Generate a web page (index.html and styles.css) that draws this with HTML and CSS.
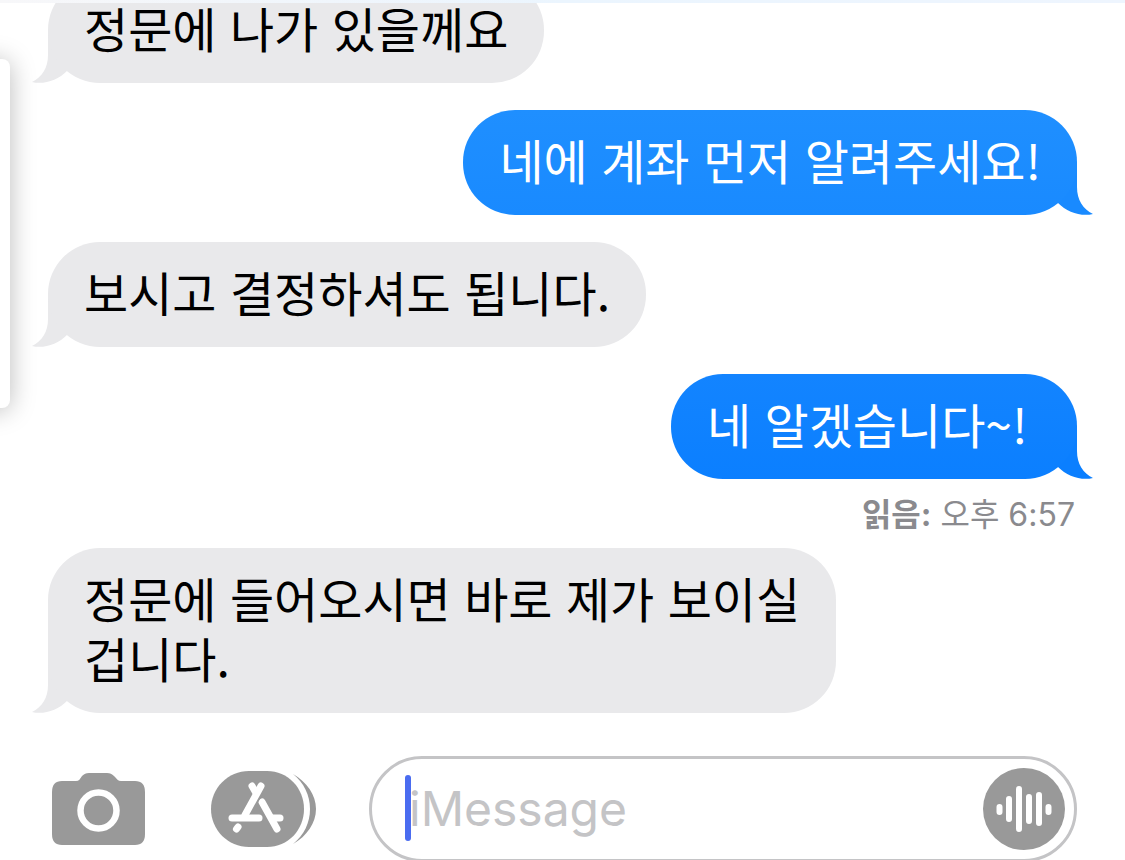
FILE: index.html
```html
<!DOCTYPE html>
<html lang="ko">
<head>
    <meta charset="UTF-8">
    <meta name="viewport" content="width=device-width, initial-scale=1.0">
    <title>iMessage</title>
    <link rel="stylesheet" href="styles.css">
</head>
<body>
    <div class="top-strip"></div>
    <main class="messages">
        <div class="bubble received">정문에 나가 있을께요
            <svg class="tail" viewBox="0 0 52 52"><path d="M16 0V24C16 37 10 46 0 51C12 54 26 49 35 40L52 0Z"/></svg>
        </div>
        <div class="bubble sent light">네에 계좌 먼저 알려주세요!
            <svg class="tail" viewBox="0 0 52 52"><path d="M16 0V24C16 37 10 46 0 51C12 54 26 49 35 40L52 0Z"/></svg>
        </div>
        <div class="bubble received">보시고 결정하셔도 됩니다.
            <svg class="tail" viewBox="0 0 52 52"><path d="M16 0V24C16 37 10 46 0 51C12 54 26 49 35 40L52 0Z"/></svg>
        </div>
        <div class="bubble sent">네 알겠습니다~!&nbsp;
            <svg class="tail" viewBox="0 0 52 52"><path d="M16 0V24C16 37 10 46 0 51C12 54 26 49 35 40L52 0Z"/></svg>
        </div>
        <p class="receipt"><b>읽음:</b> 오후 6:57</p>
        <div class="bubble received">정문에 들어오시면 바로 제가 보이실<br>겁니다.
            <svg class="tail" viewBox="0 0 52 52"><path d="M16 0V24C16 37 10 46 0 51C12 54 26 49 35 40L52 0Z"/></svg>
        </div>
    </main>

    <form class="composer">
        <button class="icon-btn camera" type="button" aria-label="카메라">
            <svg width="93" height="72" viewBox="0 0 93 72">
                <path fill="#999" d="M10 8H24C27 8 28 6 30 3C32 1 34 0 37 0H55C58 0 60 1 62 3C65 6 66 8 69 8H83Q93 8 93 19V61Q93 72 83 72H10Q0 72 0 61V19Q0 8 10 8Z"/>
                <circle cx="46.500" cy="37.500" r="18" fill="none" stroke="#fff" stroke-width="6.500"/>
            </svg>
        </button>
        <button class="icon-btn apps" type="button" aria-label="앱">
            <svg width="105" height="76" viewBox="0 0 105 76">
                <path fill="#999" d="M38 0H56C77 0 93 17 93 38S77 76 56 76H38C17 76 0 59 0 38S17 0 38 0Z"/>
                <path fill="#999" d="M82 3C96 11 105 24 105 38S96 65 82 73C93 64 99 52 99 38S93 12 82 3Z"/>
                <g fill="none" stroke="#fff" stroke-width="7" stroke-linecap="round">
                    <path d="M21 47H48"/>
                    <path stroke="#999" stroke-width="11" d="M50 30L66 58"/>
                    <path d="M51 31L66 58"/>
                    <path stroke="#999" stroke-width="10" stroke-linecap="butt" d="M50 16L41 32"/>
                    <path d="M41 15L45 22"/>
                    <path d="M50 15L34 44"/>
                    <path d="M61 47H69"/>
                    <path d="M27 56L25.500 58"/>
                </g>
            </svg>
        </button>
        <div class="field">
            <input type="text" placeholder="iMessage" aria-label="iMessage">
            <span class="caret"></span>
            <button class="icon-btn audio" type="button" aria-label="음성 메시지">
                <svg width="82" height="82" viewBox="0 0 82 82">
                    <circle cx="41" cy="41" r="41" fill="#999"/>
                    <path fill="none" stroke="#fff" stroke-width="6" stroke-linecap="round" d="M16.500 39V44M26 31V51M36 21V61M46 29V53M56 27V55M65.500 39V44"/>
                </svg>
            </button>
        </div>
    </form>

    <!-- edge panel handle on the left -->
    <aside class="side-panel"></aside>
</body>
</html>
```
FILE: styles.css
```css
* {
    box-sizing: border-box;
}

body {
    display: flex;
    flex-direction: column;
    height: 100vh;
    margin: 0;
    overflow: hidden;
    background-color: #fff;
    font-family: "Noto Sans CJK KR", sans-serif;
}

.top-strip {
    flex: none;
    height: 3px;
    background: linear-gradient(to right, #f7f7f9, #ebf5fe 50%, #eef5fe);
}

/* Conversation, pinned to the newest message */
.messages {
    isolation: isolate;
    flex: 1;
    min-height: 0;
    display: flex;
    flex-direction: column;
    justify-content: flex-end;
    align-items: flex-start;
    gap: 27px;
    padding: 0 48px 43px;
    overflow: hidden;
}

.bubble {
    position: relative;
    flex: none;
    max-width: 80%;
    padding: 19px 36px 26px;
    border-radius: 52px;
    font-size: 48px;
    line-height: 60px;
    word-break: keep-all;
}

.received {
    background-color: #e9e9eb;
    color: #000;
    fill: #e9e9eb;
}

.sent {
    align-self: flex-end;
    background: linear-gradient(#1384ff, #0b7fff);
    color: #fff;
    fill: #0b7fff;
}

.sent.light {
    background: linear-gradient(#1f8fff, #198aff);
    fill: #198aff;
}

/* Bubble tail */
.tail {
    position: absolute;
    left: -16px;
    bottom: 0;
    z-index: -1;
    width: 52px;
    height: 52px;
}

.sent .tail {
    left: auto;
    right: -16px;
    transform: scaleX(-1);
}

.receipt {
    flex: none;
    align-self: flex-end;
    margin: -11px 2px -14px 0;
    color: #8a8a8e;
    font-family: Inter, "Noto Sans CJK KR", sans-serif;
    font-size: 32px;
    line-height: 40px;
}

/* Composer */
.composer {
    flex: none;
    display: flex;
    align-items: center;
    margin-bottom: -2px;
    padding: 0 48px 0 52px;
}

.icon-btn {
    flex: none;
    padding: 0;
    border: none;
    background: none;
    cursor: pointer;
}

.icon-btn svg {
    display: block;
}

.camera {
    margin-right: 66px;
}

.apps {
    margin-right: 53px;
}

.field {
    position: relative;
    flex: 1;
    min-width: 0;
    display: flex;
    align-items: center;
    height: 106px;
    padding: 0 9px 0 37px;
    border: 3px solid #c4c4c6;
    border-radius: 53px;
}

.field input {
    flex: 1;
    min-width: 0;
    padding: 0;
    border: none;
    outline: none;
    background: none;
    font-family: Inter, "Noto Sans CJK KR", sans-serif;
    font-size: 48px;
    line-height: 60px;
}

.field input::placeholder {
    color: #c4c4c6;
    opacity: 1;
}

.caret {
    position: absolute;
    left: 33px;
    top: 16px;
    width: 6px;
    height: 66px;
    border-radius: 3px;
    background-color: #4a6cf0;
}

.side-panel {
    position: fixed;
    left: -40px;
    top: 59px;
    width: 50px;
    height: 349px;
    border-radius: 0 8px 8px 0;
    background-color: #fff;
    box-shadow: 0 2px 26px rgba(0, 0, 0, 0.27);
}
```
